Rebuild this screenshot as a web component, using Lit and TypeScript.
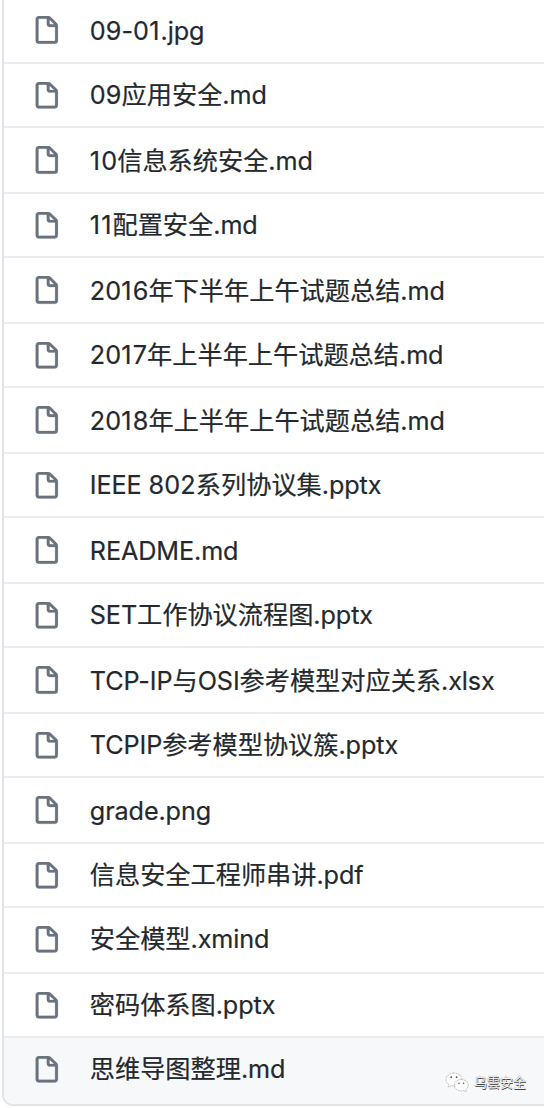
import { LitElement, html, css } from "lit";
import { customElement, property } from "lit/decorators.js";
import { classMap } from "lit/directives/class-map.js";

const FILES: { name: string; size: "tall" | "short" | "last" }[] = [
  { name: "09-01.jpg", size: "tall" },
  { name: "09应用安全.md", size: "short" },
  { name: "10信息系统安全.md", size: "tall" },
  { name: "11配置安全.md", size: "short" },
  { name: "2016年下半年上午试题总结.md", size: "tall" },
  { name: "2017年上半年上午试题总结.md", size: "short" },
  { name: "2018年上半年上午试题总结.md", size: "tall" },
  { name: "IEEE 802系列协议集.pptx", size: "short" },
  { name: "README.md", size: "tall" },
  { name: "SET工作协议流程图.pptx", size: "short" },
  { name: "TCP-IP与OSI参考模型对应关系.xlsx", size: "tall" },
  { name: "TCPIP参考模型协议簇.pptx", size: "short" },
  { name: "grade.png", size: "tall" },
  { name: "信息安全工程师串讲.pdf", size: "short" },
  { name: "安全模型.xmind", size: "last" },
  { name: "密码体系图.pptx", size: "short" },
  { name: "思维导图整理.md", size: "last" },
];

@customElement("file-row")
class FileRow extends LitElement {
  @property() name = "";
  @property() size = "short";
  @property({ type: Boolean }) active = false;

  static styles = css`
    :host {
      display: block;
    }
    .row {
      box-sizing: border-box;
      display: flex;
      align-items: flex-start;
      height: 64px;
      padding-left: 28.4px;
      border-bottom: 2px solid #eaecef;
      background: #fff;
    }
    .tall,
    .last {
      height: 66px;
    }
    .active {
      background: #f6f8fa;
      border-bottom: 0;
    }
    .icon {
      flex: none;
      width: 29.6px;
      height: 28.2px;
      margin-top: 18px;
      fill: #6a737d;
      stroke: #6a737d;
      stroke-width: 0.12;
    }
    .tall .icon {
      height: 29.6px;
    }
    .name {
      margin-left: 27.8px;
      padding-top: 11px;
      font: 25.2px/40px Inter, "Noto Sans CJK SC", sans-serif;
      color: #24292e;
      -webkit-text-stroke: 0.2px #24292e;
      white-space: pre;
    }
    .tall .name {
      padding-top: 13px;
    }
    .latin {
      letter-spacing: -0.1px;
    }
    .digit {
      letter-spacing: 0.15px;
    }
    .one {
      letter-spacing: 1.1px;
    }
  `;

  private part(text: string) {
    const kind = {
      one: text[0] === "1",
      digit: /[02-9]/.test(text[0]),
      latin: /[\x00-\x2f\x3a-\x7f]/.test(text[0]),
    };
    return html`<span class=${classMap(kind)}>${text}</span>`;
  }

  render() {
    const parts = this.name.match(/1+|[02-9]+|[\x00-\x2f\x3a-\x7f]+|[^\x00-\x7f]+/g) ?? [];
    return html`<div
      class=${classMap({ row: true, [this.size]: true, active: this.active })}
    >
      <svg class="icon" viewBox="0 0 16 16" preserveAspectRatio="none">
        <path
          fill-rule="evenodd"
          d="M3.75 1.5a.25.25 0 00-.25.25v11.5c0 .138.112.25.25.25h8.5a.25.25 0 00.25-.25V6H9.75A1.75 1.75 0 018 4.25V1.5H3.75zm5.75.56v2.19c0 .138.112.25.25.25h2.19L9.5 2.06zM2 1.75C2 .784 2.784 0 3.75 0h5.086c.464 0 .909.184 1.237.513l3.414 3.414c.329.328.513.773.513 1.237v8.086A1.75 1.75 0 0112.25 15h-8.5A1.75 1.75 0 012 13.25V1.75z"
        />
      </svg>
      <span class="name">${parts.map((p) => this.part(p))}</span>
    </div>`;
  }
}

@customElement("app-root")
class AppRoot extends LitElement {
  static styles = css`
    :host {
      display: block;
      position: relative;
      height: 1108px;
      overflow: hidden;
      background: #fff;
    }
    .list {
      margin: -2px 0 0 2px;
      border-left: 2px solid #e1e4e8;
      border-bottom: 2px solid #e1e4e8;
      border-bottom-left-radius: 11px;
      overflow: hidden;
    }
    .mark {
      position: absolute;
      left: 445px;
      top: 1071px;
      display: flex;
      align-items: center;
      gap: 5px;
      font: 13px/22px "Noto Sans CJK SC", sans-serif;
      color: #f4f4f4;
      text-shadow: 0.6px 0.6px 0.5px #444, 0 0 1px #666;
    }
    .chat {
      width: 24px;
      height: 22px;
    }
  `;

  render() {
    return html`<div class="list">
        ${FILES.map(
          (f, i) =>
            html`<file-row
              .name=${f.name}
              .size=${f.size}
              .active=${i === FILES.length - 1}
            ></file-row>`
        )}
      </div>
      <div class="mark">
        <svg class="chat" viewBox="0 0 24 22">
          <g fill="#fff" stroke="#a9abac" stroke-width=".7" stroke-dasharray="2 .7">
            <path d="M9 2C4.600 2 1 4.800 1 8.500c0 2.100 1.100 3.900 2.900 5.100L3 16.200l3.200-1.600c.9.300 1.800.4 2.800.4 4.400 0 8-2.900 8-6.500S13.400 2 9 2z" />
            <path d="M16.300 8.500c-3.900 0-7 2.500-7 5.700s3.100 5.700 7 5.700c.9 0 1.700-.1 2.500-.4l2.400 1.300-.6-2.200c1.600-1.100 2.600-2.600 2.600-4.400 0-3.200-3.100-5.700-6.900-5.700z" />
          </g>
          <g fill="#555">
            <circle cx="6.300" cy="6.200" r=".9" /><circle cx="11.600" cy="6.200" r=".9" />
            <circle cx="14" cy="12.300" r=".8" /><circle cx="18.600" cy="12.300" r=".8" />
          </g>
        </svg>
        <span>乌雲安全</span>
      </div>`;
  }
}
